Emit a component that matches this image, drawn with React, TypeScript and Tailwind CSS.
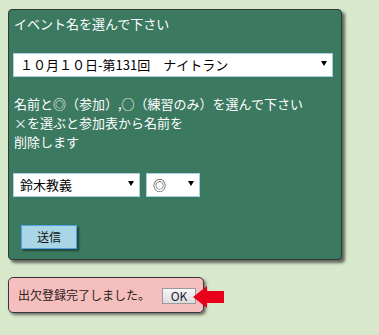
import React from 'react';

const font = { fontFamily: '"Noto Sans CJK JP", "Liberation Sans", sans-serif' };

function FakeSelect({ value, width }: { value: string; width: string }) {
  return (
    <div className={`relative h-[24px] ${width}`}>
      <select
        className="h-full w-full appearance-none rounded-none border border-[#a9cfe6] bg-white pl-[6px] pr-[18px] text-[13px] leading-[22px] text-black outline-none"
        style={font}
        defaultValue={value}
      >
        <option>{value}</option>
      </select>
      <span className="pointer-events-none absolute right-[6px] top-[10px] h-0 w-0 border-x-[3px] border-t-[5px] border-x-transparent border-t-black" />
    </div>
  );
}

export default function App() {
  return (
    <div className="min-h-[335px] w-[379px] bg-[#d8e8cb] pl-[8px] pt-[9px]" style={font}>
      <div className="flex w-[334px] flex-col rounded-[4px] border border-[#2e3b36] bg-[#3b7960] px-[4px] pb-[10px] pt-[5px] shadow-[3px_3px_3px_rgba(0,0,0,0.55)]">
        <p className="pl-[1px] text-[13px] leading-[17px] text-white">イベント名を選んで下さい</p>

        <div className="mt-[19px]">
          <FakeSelect value="１０月１０日-第131回　ナイトラン" width="w-[320px]" />
        </div>

        <div className="mt-[19px] pl-[1px] text-[13px] leading-[19px] text-white">
          <p>名前と◎（参加）,○（練習のみ）を選んで下さい</p>
          <p>×を選ぶと参加表から名前を</p>
          <p>削除します</p>
        </div>

        <div className="mt-[20px] flex gap-[6px]">
          <FakeSelect value="鈴木教義" width="w-[127px]" />
          <FakeSelect value="◎" width="w-[54px]" />
        </div>

        <div className="mt-[28px] pl-[8px]">
          <button className="h-[24px] w-[56px] border border-[#4ea3e6] bg-[#a9d6e6] text-[12px] text-[#111] shadow-[2px_2px_2px_rgba(0,0,0,0.45)]">
            送信
          </button>
        </div>
      </div>

      <div className="relative mt-[17px] flex h-[36px] w-[196px] items-center rounded-[5px] border border-[#3a3340] bg-[#f5bfbd] pl-[9px] shadow-[2px_2px_3px_rgba(0,0,0,0.5)]">
        <span className="text-[12px] text-[#2a2020]">出欠登録完了しました。</span>
        <button className="absolute left-[153px] top-[10px] h-[16px] w-[34px] border border-[#9a9a9a] bg-gradient-to-b from-[#f7f7f7] to-[#dcdcdc] text-[12px] leading-[14px] text-[#1a1a3a]">
          OK
        </button>
        <svg className="absolute left-[184px] top-[8px]" width="32" height="23" viewBox="0 0 32 23">
          <polygon points="0,11 14,0 14,5 31,5 31,17 14,17 14,22" fill="#e8001b" />
        </svg>
      </div>
    </div>
  );
}
